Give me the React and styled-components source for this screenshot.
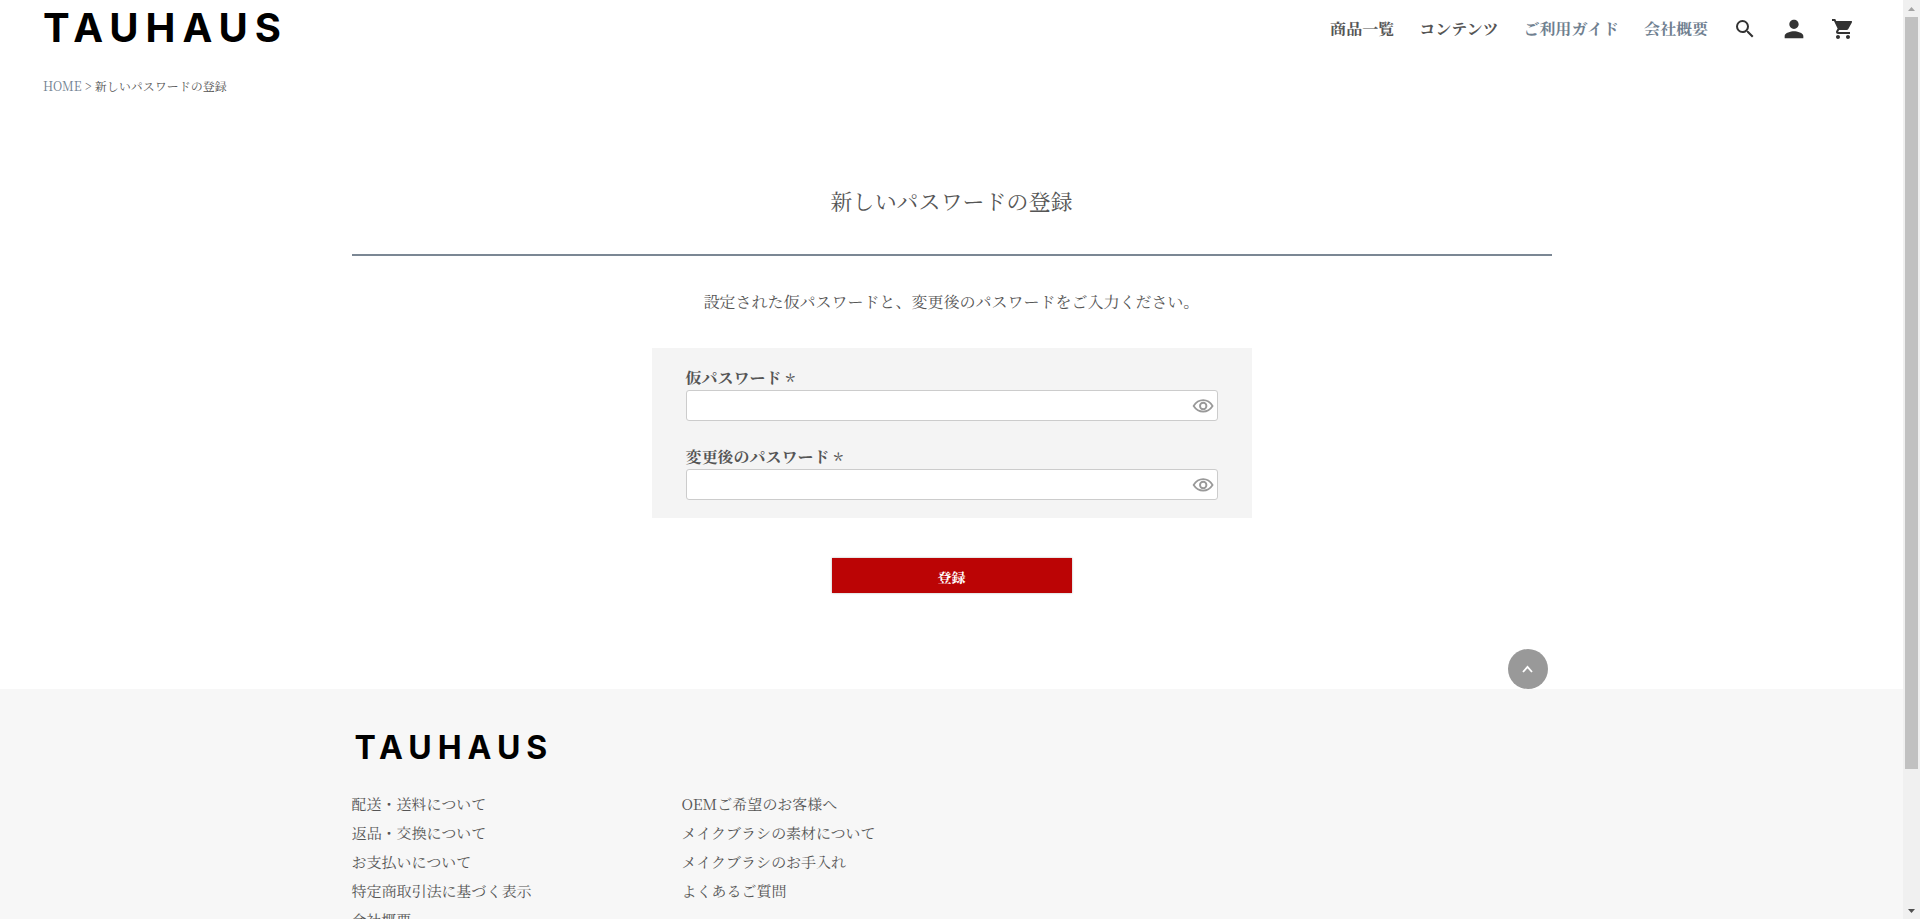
import React, { useState } from "react";
import styled, { createGlobalStyle, css } from "styled-components";
import { MdSearch, MdPerson, MdShoppingCart } from "react-icons/md";

const GlobalStyle = createGlobalStyle`
  *, *::before, *::after { box-sizing: border-box; }
  html { scrollbar-width: none; }
  html::-webkit-scrollbar { display: none; }
  body {
    margin: 0;
    padding-right: 17px;
    background: #fff;
    color: #555;
    font-family: "Noto Serif JP", "Noto Serif CJK JP", "Liberation Serif", "Noto Sans CJK JP", serif;
    font-size: 16px;
    line-height: 24px;
  }
  a { color: inherit; text-decoration: none; }
  ul { list-style: none; margin: 0; padding: 0; }
`;

const Header = styled.header`
  display: flex;
  align-items: center;
  gap: 25px;
  height: 58px;
  padding: 0 48px 0 43px;
`;

const Logo = styled.a`
  margin-right: auto;
  color: #000;
  font-family: Inter, "Liberation Sans", sans-serif;
  font-weight: 700;
  ${({ $small }) =>
    $small
      ? css`
          display: block;
          padding-left: 3px;
          font-size: 32px;
          line-height: 40px;
          letter-spacing: 6px;
        `
      : css`
          font-size: 40px;
          line-height: 48px;
          letter-spacing: 7px;
          padding-bottom: 2px;
        `}
`;

const Nav = styled.nav`
  display: flex;
  gap: 25px;
  font-weight: 700;
`;

const NavLink = styled.a`
  color: ${({ $accent }) => ($accent ? "#708090" : "#555")};
`;

const Tools = styled.div`
  display: flex;
  align-items: center;
  gap: 25px;
`;

const Tool = styled.a`
  display: flex;
  justify-content: center;
  width: 24px;
  color: #333;
  svg { flex: none; }
`;

const Breadcrumb = styled.nav`
  padding: 16px 43px 0;
  font-size: 12px;
  a { color: #708090; }
`;

const Main = styled.main`
  max-width: 1200px;
  margin: 0 auto;
  padding-top: 87px;
`;

const Title = styled.h1`
  margin: 0;
  padding-bottom: 37px;
  border-bottom: 2px solid #7b8794;
  font-size: 22px;
  font-weight: 400;
  line-height: 32px;
  text-align: center;
`;

const Lead = styled.p`
  margin: 34px 0;
  text-align: center;
`;

const Form = styled.form`
  display: flex;
  flex-direction: column;
  align-items: center;
  gap: 40px;
`;

const Panel = styled.div`
  display: flex;
  flex-direction: column;
  gap: 24px;
  width: 100%;
  max-width: 600px;
  padding: 18px 34px;
  background: #f4f4f4;
`;

const Label = styled.label`
  display: block;
  height: 24px;
  font-weight: 700;
  span {
    margin-left: 4px;
    font-size: 20px;
    line-height: 20px;
    font-weight: 400;
    vertical-align: -6px;
  }
`;

const InputBox = styled.div`
  display: flex;
  align-items: center;
  height: 31px;
  padding-right: 3px;
  border: 1px solid #ccc;
  border-radius: 3px;
  background: #fff;
`;

const Input = styled.input`
  flex: 1;
  min-width: 0;
  height: 29px;
  padding: 0 8px;
  border: 0;
  outline: 0;
  background: transparent;
  font: inherit;
  color: inherit;
`;

const EyeButton = styled.button`
  display: flex;
  padding: 0;
  border: 0;
  background: none;
  cursor: pointer;
`;

const Submit = styled.button`
  width: 240px;
  height: 35px;
  padding: 2px 0 0;
  border: 0;
  background: #bb0405;
  box-shadow: 0 0 2px rgba(0, 0, 0, 0.3);
  color: #fff;
  font-family: inherit;
  font-size: 14px;
  font-weight: 700;
  cursor: pointer;
`;

const TopRow = styled.div`
  display: flex;
  justify-content: flex-end;
  padding: 56px 4px 0;
`;

const TopLink = styled.a`
  display: flex;
  align-items: center;
  justify-content: center;
  width: 40px;
  height: 40px;
  border-radius: 50%;
  background: #999;
`;

const Footer = styled.footer`
  padding: 39px 0 130px;
  background: #f7f7f7;
`;

const FooterInner = styled.div`
  max-width: 1200px;
  margin: 0 auto;
`;

const FooterColumns = styled.div`
  display: grid;
  grid-template-columns: 330px 1fr;
  padding-top: 21px;
  font-size: 15px;
  line-height: 29px;
`;

const ScrollTrack = styled.div`
  position: fixed;
  top: 0;
  right: 0;
  bottom: 0;
  display: flex;
  flex-direction: column;
  align-items: center;
  width: 17px;
  background: #f0f0f0;
`;

const ScrollArrow = styled.svg`
  flex: none;
  width: 17px;
  height: 17px;
  fill: ${({ $active }) => ($active ? "#505050" : "#a3a3a3")};
`;

const ScrollLane = styled.div`
  flex: 1;
  width: 13px;
`;

const ScrollThumb = styled.div`
  height: 85%;
  background: #c1c1c1;
`;

const navLinks = [
  { text: "商品一覧" },
  { text: "コンテンツ" },
  { text: "ご利用ガイド", accent: true },
  { text: "会社概要", accent: true },
];

const footerLinks = [
  ["配送・送料について", "返品・交換について", "お支払いについて", "特定商取引法に基づく表示", "会社概要"],
  ["OEMご希望のお客様へ", "メイクブラシの素材について", "メイクブラシのお手入れ", "よくあるご質問"],
];

function PasswordField({ id, label }) {
  const [shown, setShown] = useState(false);
  return (
    <div>
      <Label htmlFor={id}>
        {label}
        <span>*</span>
      </Label>
      <InputBox>
        <Input id={id} type={shown ? "text" : "password"} required />
        <EyeButton type="button" aria-label="パスワードを表示" onClick={() => setShown(!shown)}>
          <svg width="22" height="14" viewBox="0 0 22 14" fill="none" stroke="#999">
            <path d="M1.6 7C4 3.2 7.3 1.2 11.2 1.2S18.2 3.2 20.6 7C18.2 10.6 15 12.6 11.2 12.6S4 10.6 1.6 7Z" strokeWidth="1.8" strokeLinejoin="round" />
            <circle cx="11.2" cy="7" r="3.2" strokeWidth="1.9" />
          </svg>
        </EyeButton>
      </InputBox>
    </div>
  );
}

export default function App() {
  return (
    <>
      <GlobalStyle />
      <Header>
        <Logo href="#">TAUHAUS</Logo>
        <Nav>
          {navLinks.map((l) => (
            <NavLink key={l.text} href="#" $accent={l.accent}>{l.text}</NavLink>
          ))}
        </Nav>
        <Tools>
          <Tool href="#" aria-label="検索"><MdSearch size={24} /></Tool>
          <Tool href="#" aria-label="マイページ"><MdPerson size={28} /></Tool>
          <Tool href="#" aria-label="カート"><MdShoppingCart size={24} /></Tool>
        </Tools>
      </Header>
      <Breadcrumb>
        <a href="#">HOME</a> &gt; 新しいパスワードの登録
      </Breadcrumb>
      <Main>
        <Title>新しいパスワードの登録</Title>
        <Lead>設定された仮パスワードと、変更後のパスワードをご入力ください。</Lead>
        <Form onSubmit={(e) => e.preventDefault()}>
          <Panel>
            <PasswordField id="temporary" label="仮パスワード" />
            <PasswordField id="renewed" label="変更後のパスワード" />
          </Panel>
          <Submit type="submit">登録</Submit>
        </Form>
        <TopRow>
          <TopLink href="#" aria-label="ページの先頭へ">
            <svg width="12" height="8" viewBox="0 0 12 8" fill="none" stroke="#fff" strokeWidth="1.8">
              <path d="M1 7 5.5 1.8 10 7" />
            </svg>
          </TopLink>
        </TopRow>
      </Main>
      <Footer>
        <FooterInner>
          <Logo href="#" $small>TAUHAUS</Logo>
          <FooterColumns>
            {footerLinks.map((column) => (
              <ul key={column[0]}>
                {column.map((text) => (
                  <li key={text}><a href="#">{text}</a></li>
                ))}
              </ul>
            ))}
          </FooterColumns>
        </FooterInner>
      </Footer>
      <ScrollTrack aria-hidden="true">
        <ScrollArrow viewBox="0 0 17 17"><path d="M5 11 8.5 7 12 11Z" /></ScrollArrow>
        <ScrollLane><ScrollThumb /></ScrollLane>
        <ScrollArrow viewBox="0 0 17 17" $active><path d="M5 7 8.5 11 12 7Z" /></ScrollArrow>
      </ScrollTrack>
    </>
  );
}
